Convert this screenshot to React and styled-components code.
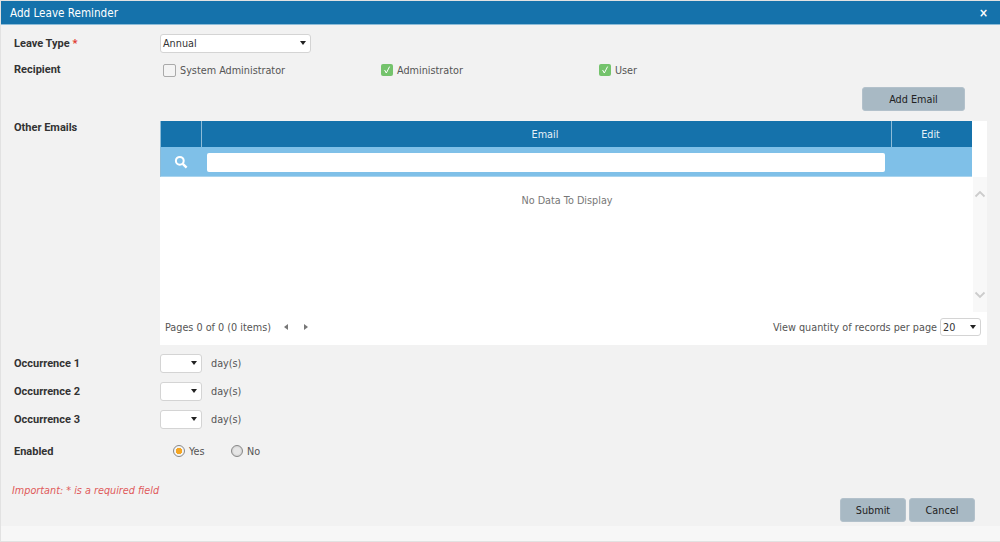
import React from 'react';
import styled, { createGlobalStyle } from 'styled-components';

const GlobalStyle = createGlobalStyle`
  html, body { margin: 0; padding: 0; background: #fff; }
  body { font-family: "DejaVu Sans Condensed", "DejaVu Sans", sans-serif; font-size: 10.75px; color: #555; }
`;

function Caret() {
  return <CaretMark />;
}

function Check() {
  return (
    <svg width="10" height="10" viewBox="0 0 10 10">
      <path d="M2.6 5 L4.3 8 L7.6 1.6" fill="none" stroke="#fff" strokeWidth="1" />
    </svg>
  );
}

function Occurrence({ label }) {
  return (
    <OccurrenceRow>
      <Label>{label}</Label>
      <SmallSelect><Caret /></SmallSelect>
      <Days>day(s)</Days>
    </OccurrenceRow>
  );
}

export default function App() {
  return (
    <>
      <GlobalStyle />
      <Dialog>
        <Header>
          <span>Add Leave Reminder</span>
          <Close>×</Close>
        </Header>
        <Body>
          <LeaveRow>
            <Label>Leave Type <Req>*</Req></Label>
            <LeaveSelect>Annual<Caret /></LeaveSelect>
          </LeaveRow>
          <RecipientRow>
            <Label>Recipient</Label>
            <CheckItem $width="218px"><Box />System Administrator</CheckItem>
            <CheckItem $width="218px"><Box $on><Check /></Box>Administrator</CheckItem>
            <CheckItem><Box $on><Check /></Box>User</CheckItem>
          </RecipientRow>
          <AddRow><Button $width="103px">Add Email</Button></AddRow>
          <EmailsRow>
            <Label>Other Emails</Label>
            <Panel>
              <HeadRow>
                <HeadCell $width="41px" />
                <HeadCell $grow $shift="3px">Email</HeadCell>
                <HeadCell $width="80px" $shift="3px" $last>Edit</HeadCell>
              </HeadRow>
              <FilterRow>
                <SearchCell>
                  <svg width="14" height="14" viewBox="0 0 14 14">
                    <circle cx="5.8" cy="5.8" r="3.9" fill="none" stroke="#fff" strokeWidth="2" />
                    <path d="M8.8 8.8 L12.6 12.6" stroke="#fff" strokeWidth="2.4" />
                  </svg>
                </SearchCell>
                <SearchInput />
              </FilterRow>
              <Rows>
                <Empty>No Data To Display</Empty>
                <ScrollTrack>
                  <svg width="12" height="8" viewBox="0 0 12 8">
                    <path d="M1.5 6.5 L6 2 L10.5 6.5" fill="none" stroke="#ccc" strokeWidth="1.8" />
                  </svg>
                  <svg width="12" height="8" viewBox="0 0 12 8">
                    <path d="M1.5 1.5 L6 6 L10.5 1.5" fill="none" stroke="#ccc" strokeWidth="1.8" />
                  </svg>
                </ScrollTrack>
              </Rows>
              <Pager>
                <span>Pages 0 of 0 (0 items)</span>
                <PageArrow $dir="left" />
                <PageArrow $dir="right" />
                <Spacer />
                <span>View quantity of records per page</span>
                <PerPage>20<Caret /></PerPage>
              </Pager>
            </Panel>
          </EmailsRow>
          <Occurrences>
            <Occurrence label="Occurrence 1" />
            <Occurrence label="Occurrence 2" />
            <Occurrence label="Occurrence 3" />
          </Occurrences>
          <EnabledRow>
            <Label>Enabled</Label>
            <RadioItem $width="58px"><Radio $on />Yes</RadioItem>
            <RadioItem><Radio />No</RadioItem>
          </EnabledRow>
          <Important>Important: * is a required field</Important>
          <Actions>
            <Button $width="66px">Submit</Button>
            <Button $width="66px">Cancel</Button>
          </Actions>
        </Body>
        <Footer />
      </Dialog>
    </>
  );
}

//* Styled Components

const Dialog = styled.div`
  width: 1000px;
  height: 542px;
  box-sizing: border-box;
  padding: 1px 0 1px 1px;
  background: #e2e2e2;
  display: flex;
  flex-direction: column;
  overflow: hidden;
`;

const Header = styled.header`
  height: 24px;
  box-sizing: border-box;
  flex: none;
  background: #1572ab;
  border-bottom: 1px solid #8dbcd8;
  color: #fff;
  font-size: 11.6px;
  display: flex;
  align-items: center;
  justify-content: space-between;
  padding: 1px 12px 0 9px;
`;

const Close = styled.span`
  font-size: 12px;
  font-weight: 700;
  line-height: 1;
`;

const Body = styled.main`
  flex: 1;
  background: #f2f2f2;
  position: relative;
  padding-top: 8px;
`;

const Footer = styled.footer`
  height: 15px;
  flex: none;
  background: #f7f7f7;
`;

const Label = styled.div`
  width: 146px;
  padding-left: 13px;
  flex: none;
  box-sizing: content-box;
  font-family: Roboto, sans-serif;
  font-weight: 700;
  color: #333;
  font-size: 11px;
`;

const Req = styled.span`
  color: #e0392b;
`;

const LeaveRow = styled.div`
  display: flex;
  align-items: center;
  height: 20px;
`;

const selectBase = `
  box-sizing: border-box;
  background: #fff;
  border: 1px solid #d4d4d4;
  border-radius: 3px;
  display: flex;
  align-items: center;
  justify-content: space-between;
  color: #333;
  font-size: 10.75px;
`;

const CaretMark = styled.i`
  width: 0;
  height: 0;
  border-left: 3.5px solid transparent;
  border-right: 3.5px solid transparent;
  border-top: 4px solid #222;
`;

const LeaveSelect = styled.div`
  ${selectBase}
  width: 151px;
  height: 19px;
  padding: 0 4px 0 2px;
`;

const RecipientRow = styled.div`
  display: flex;
  align-items: center;
  height: 18px;
  margin-top: 8px;

  ${Label} { margin-top: -1px; }
`;

const CheckItem = styled.label`
  width: ${p => p.$width || 'auto'};
  display: flex;
  align-items: center;
  gap: 4px;
  padding-left: 3px;
  box-sizing: border-box;
  color: #555;
`;

const Box = styled.span`
  width: 11px;
  height: 11px;
  box-sizing: content-box;
  display: flex;
  align-items: center;
  justify-content: center;
  border-radius: 2px;
  border: ${p => (p.$on ? '0' : '1px solid #aaa')};
  padding: ${p => (p.$on ? '0.5px' : '0')};
  background: ${p => (p.$on ? '#74c36c' : '#f4f4f4')};
`;

const AddRow = styled.div`
  display: flex;
  justify-content: flex-end;
  padding-right: 35px;
  margin-top: 8px;
`;

const Button = styled.button`
  width: ${p => p.$width};
  height: 24px;
  padding: 0;
  border: 1px solid #b3c1cb;
  border-radius: 3px;
  background: #a8b9c4;
  color: #222;
  font: 400 10.75px "DejaVu Sans Condensed", "DejaVu Sans", sans-serif;
`;

const EmailsRow = styled.div`
  display: flex;
  margin-top: 10px;
`;

const Panel = styled.section`
  width: 827px;
  background: #fff;
`;

const HeadRow = styled.div`
  display: flex;
  width: 812px;
  height: 27px;
  background: #1572ab;
  color: #e6f1f8;
  box-sizing: border-box;
  border-left: 1px solid #8dbcd8;
  border-bottom: 1px solid #7fc0e8;
`;

const HeadCell = styled.div`
  width: ${p => p.$width || 'auto'};
  flex: ${p => (p.$grow ? 1 : 'none')};
  display: flex;
  align-items: center;
  justify-content: center;
  box-sizing: border-box;
  padding-right: ${p => p.$shift || 0};
  border-right: ${p => (p.$last ? '0' : '1px solid #8dbcd8')};
`;

const FilterRow = styled.div`
  display: flex;
  align-items: center;
  width: 812px;
  height: 29px;
  background: #7fc0e8;
  border-bottom: 1px solid #a9d4ee;
  box-sizing: border-box;
  border-left: 1px solid #8dbcd8;
`;

const SearchCell = styled.div`
  width: 46px;
  display: flex;
  justify-content: center;
  padding-right: 6px;
  box-sizing: border-box;
  flex: none;
`;

const SearchInput = styled.div`
  width: 678px;
  height: 19px;
  background: #fff;
  border-radius: 2px;
`;

const Rows = styled.div`
  display: flex;
  height: 135px;
`;

const Empty = styled.div`
  width: 813px;
  flex: none;
  text-align: center;
  padding: 17px 0 0 1px;
  color: #777;
  box-sizing: border-box;
`;

const ScrollTrack = styled.div`
  flex: 1;
  background: #f8f8f8;
  display: flex;
  flex-direction: column;
  justify-content: space-between;
  align-items: center;
  padding: 13px 0 13px;
  box-sizing: border-box;
`;

const Pager = styled.div`
  height: 33px;
  display: flex;
  align-items: center;
  padding: 0 6px 3px 5px;
  box-sizing: border-box;
  color: #555;
`;

const PageArrow = styled.i`
  width: 0;
  height: 0;
  border-top: 3px solid transparent;
  border-bottom: 3px solid transparent;
  ${p => (p.$dir === 'left'
    ? 'border-right: 4px solid #777; margin-left: 13px;'
    : 'border-left: 4px solid #777; margin-left: 16px;')}
`;

const Spacer = styled.div`
  flex: 1;
`;

const PerPage = styled.div`
  ${selectBase}
  width: 41px;
  height: 18px;
  margin-left: 3px;
  padding: 0 4px 0 2px;
`;

const Occurrences = styled.div`
  display: flex;
  flex-direction: column;
  gap: 10px;
  margin-top: 9px;
`;

const OccurrenceRow = styled.div`
  display: flex;
  align-items: center;
  height: 18px;
`;

const SmallSelect = styled.div`
  ${selectBase}
  width: 42px;
  height: 19px;
  justify-content: flex-end;
  padding-right: 4px;
`;

const Days = styled.span`
  margin-left: 9px;
  color: #555;
`;

const EnabledRow = styled.div`
  display: flex;
  align-items: center;
  height: 18px;
  margin-top: 14px;
`;

const RadioItem = styled.label`
  width: ${p => p.$width || 'auto'};
  display: flex;
  align-items: center;
  gap: 4px;
  color: #555;
  &:first-of-type { margin-left: 13px; }
`;

const Radio = styled.span`
  width: 10px;
  height: 10px;
  border-radius: 50%;
  flex: none;
  border: 1px solid #888;
  background: ${p => (p.$on
    ? 'radial-gradient(circle, #f5a623 0 3px, #f4f4f4 3.5px)'
    : 'radial-gradient(circle, #e6e6e6 0 3px, #d4d4d4 5px)')};
`;

const Important = styled.div`
  margin-top: 24px;
  padding-left: 11px;
  color: #e05a5a;
  font-style: italic;
`;

const Actions = styled.div`
  position: absolute;
  right: 25px;
  bottom: 4px;
  display: flex;
  gap: 3px;
`;
